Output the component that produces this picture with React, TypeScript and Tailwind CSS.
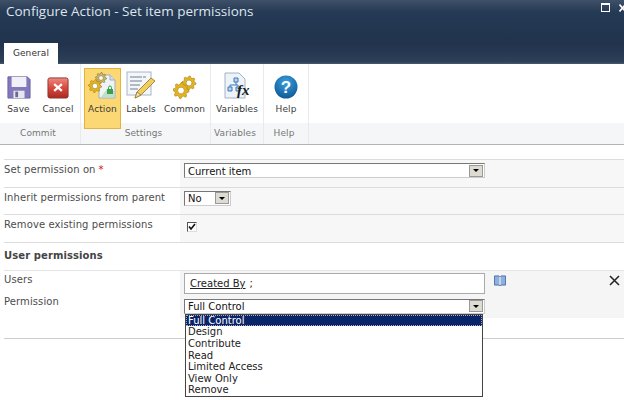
const VERDANA = "font-['DejaVu_Sans',Verdana,sans-serif]";

function gearPath(cx: number, cy: number, r: number, teeth = 8) {
  const pts: string[] = [];
  const step = (Math.PI * 2) / (teeth * 4);
  for (let i = 0; i < teeth * 4; i++) {
    const rad = i % 4 === 0 || i % 4 === 1 ? r : r * 0.76;
    const a = i * step;
    pts.push(`${(cx + rad * Math.cos(a)).toFixed(2)} ${(cy + rad * Math.sin(a)).toFixed(2)}`);
  }
  return `M${pts.join("L")}Z`;
}

function Gear({ cx, cy, r, color = "#e3b422", edge = "#a87f10" }: { cx: number; cy: number; r: number; color?: string; edge?: string }) {
  return (
    <g>
      <path d={gearPath(cx, cy, r)} fill={color} stroke={edge} strokeWidth="0.6" />
      <circle cx={cx} cy={cy} r={r * 0.42} fill="#fff" stroke={edge} strokeWidth="0.6" />
    </g>
  );
}

function SaveIcon() {
  return (
    <svg width="24" height="24" viewBox="0 0 26 26">
      <path d="M1 2h21l3 3v20H1z" fill="#8378bc" stroke="#6a5fa4" />
      <rect x="5" y="2" width="16" height="11" fill="#f0f0f8" />
      <rect x="7" y="17" width="12" height="8" fill="#e6e6ee" />
      <rect x="9" y="18" width="3" height="6" fill="#6a6a8a" />
    </svg>
  );
}

function CancelIcon() {
  return (
    <svg width="23" height="23" viewBox="0 0 24 24">
      <defs>
        <linearGradient id="cancel" x1="0" y1="0" x2="0" y2="1">
          <stop offset="0" stopColor="#ee8a80" />
          <stop offset="0.5" stopColor="#d9483c" />
          <stop offset="1" stopColor="#a82a22" />
        </linearGradient>
      </defs>
      <rect x="1" y="2" width="21" height="21" rx="2" fill="url(#cancel)" stroke="#8a3a34" />
      <path d="M7.5 8.5l8 7M15.5 8.5l-8 7" stroke="#fff" strokeWidth="2.4" />
    </svg>
  );
}

function ActionIcon() {
  return (
    <svg width="29" height="27" viewBox="0 0 29 27">
      <path d="M11 3h11l5 5v18H11z" fill="#eef3f6" stroke="#9fb0bd" />
      <path d="M22 3v5h5" fill="#cfe0ec" stroke="#9fb0bd" />
      <path d="M13 25l6-8 7 2v6z" fill="#bfe0c8" />
      <Gear cx={13} cy={6} r={5.5} color="#c9b467" edge="#8a7a3a" />
      <Gear cx={7} cy={14} r={6.5} />
      <rect x="19" y="17" width="6" height="5" fill="#3aa04a" />
      <path d="M20.5 17v-1.5a1.5 1.5 0 013 0V17" fill="none" stroke="#3aa04a" />
    </svg>
  );
}

function LabelsIcon() {
  return (
    <svg width="30" height="28" viewBox="0 0 30 28">
      <rect x="1" y="1" width="24" height="23" fill="#f3f6fa" stroke="#a7b6c6" />
      <path d="M4 6h16M4 10h13M4 14h10M4 18h8" stroke="#6f7f90" strokeDasharray="12 1" />
      <path d="M9 27l2-6L25 7l4 3L15 24z" fill="#f0cf60" stroke="#a58a38" />
      <path d="M9 27l2-6 4 3z" fill="#f0dcc0" stroke="#a58a38" />
    </svg>
  );
}

function CommonIcon() {
  return (
    <svg width="24" height="24" viewBox="0 0 24 24">
      <Gear cx={16} cy={8} r={7} />
      <Gear cx={8} cy={15.5} r={8} />
    </svg>
  );
}

function VariablesIcon() {
  return (
    <svg width="27" height="27" viewBox="0 0 27 27">
      <path d="M1 1h14l6 6v19H1z" fill="#eef3fa" stroke="#a4b2c4" />
      <path d="M10 6h4v4h-4zM4 15h4v4H4zM12 15h4v4h-4z" fill="#bcd4ee" stroke="#3f78b8" />
      <path d="M12 10v3M6 15v-2h8v2" fill="none" stroke="#3f78b8" />
      <text x="13" y="23" fontFamily="'Liberation Serif',serif" fontStyle="italic" fontWeight="700" fontSize="15" fill="#1a1a1a">
        fx
      </text>
    </svg>
  );
}

function HelpIcon() {
  return (
    <svg width="24" height="24" viewBox="0 0 24 24">
      <defs>
        <radialGradient id="help" cx="0.5" cy="0.3" r="0.8">
          <stop offset="0" stopColor="#3aa0e0" />
          <stop offset="1" stopColor="#0a4f8c" />
        </radialGradient>
      </defs>
      <circle cx="12" cy="12" r="11.5" fill="url(#help)" />
      <text x="12" y="18" textAnchor="middle" fontFamily="'Liberation Sans',sans-serif" fontWeight="700" fontSize="17" fill="#fff">
        ?
      </text>
    </svg>
  );
}

function RibbonButton({ label, icon, width, active }: { label: string; icon: React.ReactNode; width: string; active?: boolean }) {
  return (
    <div
      className={`relative z-10 flex h-[61px] flex-col items-center ${width} ${
        active ? "border border-[#e2b33f] bg-[#fbd873]" : "border border-transparent"
      }`}
    >
      <div className="flex h-[30px] items-end justify-center">{icon}</div>
      <span className="mt-[3px] text-[9px] leading-[14px] tracking-[0.1px] whitespace-nowrap text-[#3b3b3b]">{label}</span>
    </div>
  );
}

function RibbonGroup({ label, width, className, children }: { label: string; width: string; className?: string; children: React.ReactNode }) {
  return (
    <div className={`flex flex-col border-r border-[#e8eaec] ${width}`}>
      <div className={`flex h-[59px] pt-[4px] ${className ?? ""}`}>{children}</div>
      <div className="flex h-[21px] items-center justify-center bg-[#f5f6f7] pr-[4px] text-[9px] tracking-[0.1px] text-[#777]">{label}</div>
    </div>
  );
}

function FormRow({ label, required, children, alignTop = "pt-[3px]" }: { label: string; required?: boolean; children: React.ReactNode; alignTop?: string }) {
  return (
    <div className="ml-[4px] flex h-[27.6px] border-t border-[#dcdcdc]">
      <div className="w-[176px] pt-[2px] text-[10px] tracking-[0.1px] text-[#4c4c4c]">
        {label}
        {required && <span className="ml-[3px] text-[#d01010]">*</span>}
      </div>
      <div className={`flex flex-1 items-start bg-[#f7f7f7] pl-[4px] ${alignTop}`}>{children}</div>
    </div>
  );
}

function SelectBox({ value, width }: { value: string; width: string }) {
  return (
    <div className={`flex h-[15px] items-center justify-between border border-t-[#777] border-r-[#ccc] border-b-[#ccc] border-l-[#777] bg-white pr-px pl-[3px] text-[10px] leading-[13px] text-[#111] ${width}`}>
      <span className="pt-[1px]">{value}</span>
      <span className="flex h-[12px] w-[14px] items-center justify-center border border-[#999] bg-[#dedbd2]">
        <span className="h-0 w-0 border-x-[3px] border-t-[3px] border-x-transparent border-t-black" />
      </span>
    </div>
  );
}

const options = ["Full Control", "Design", "Contribute", "Read", "Limited Access", "View Only", "Remove"];

export default function App() {
  return (
    <div className={`h-[400px] w-[624px] overflow-hidden bg-white ${VERDANA}`}>
      <header className="flex h-[64px] flex-col justify-between bg-[linear-gradient(#3f5068_0,#253a55_12px,#21334d_45px,#2e4058_62px,#4a5a70_64px)]">
        <div className="flex items-start justify-between pl-[6px]">
          <h1 className="font-['Open_Sans',sans-serif] text-[13.5px] leading-[22px] text-[#dfe5ec]">Configure Action - Set item permissions</h1>
          <div className="flex items-center gap-[9px] pt-[3px]">
            <span className="h-[9px] w-[9px] border border-white border-t-2" />
            <svg width="5" height="8" viewBox="0 0 5 8">
              <path d="M0.5 0.5l6 7M6.5 0.5l-6 7" stroke="#fff" strokeWidth="1.6" />
            </svg>
          </div>
        </div>
        <div className="ml-[4px] flex h-[21px] w-[54px] items-center justify-center bg-white text-[9px] tracking-[0.1px] text-[#333]">General</div>
      </header>

      <div className="flex h-[81px] border-b border-[#b0b4b8]">
        <RibbonGroup label="Commit" width="w-[81px]" className="pl-[1px]">
          <RibbonButton label="Save" width="w-[35px]" icon={<SaveIcon />} />
          <RibbonButton label="Cancel" width="w-[44px]" icon={<CancelIcon />} />
        </RibbonGroup>
        <RibbonGroup label="Settings" width="w-[130px]" className="pl-[3px]">
          <RibbonButton label="Action" width="w-[37px]" active icon={<ActionIcon />} />
          <RibbonButton label="Labels" width="w-[40px]" icon={<LabelsIcon />} />
          <RibbonButton label="Common" width="w-[47px]" icon={<CommonIcon />} />
        </RibbonGroup>
        <RibbonGroup label="Variables" width="w-[53px]">
          <RibbonButton label="Variables" width="w-[52px]" icon={<VariablesIcon />} />
        </RibbonGroup>
        <RibbonGroup label="Help" width="w-[45px]">
          <RibbonButton label="Help" width="w-[44px]" icon={<HelpIcon />} />
        </RibbonGroup>
        <div className="flex flex-1 flex-col justify-end">
          <div className="h-[21px] bg-[#f5f6f7]" />
        </div>
      </div>

      <div className="pt-[14px]">
        <FormRow label="Set permission on" required>
          <SelectBox value="Current item" width="w-[301px]" />
        </FormRow>
        <FormRow label="Inherit permissions from parent">
          <SelectBox value="No" width="w-[47px]" />
        </FormRow>
        <FormRow label="Remove existing permissions" alignTop="pt-[7px]">
          <span className="ml-[3px] flex h-[10px] w-[10px] items-center justify-center border border-t-[#555] border-r-[#ddd] border-b-[#ddd] border-l-[#555] bg-white">
            <svg width="8" height="8" viewBox="0 0 8 8">
              <path d="M1 3.5l2 2.5 4-5" fill="none" stroke="#111" strokeWidth="1.6" />
            </svg>
          </span>
        </FormRow>
        <div className="ml-[4px] h-[28px] border-t border-[#dcdcdc] pt-[5px] text-[10px] font-bold tracking-[0.1px] text-[#444]">User permissions</div>

        <div className="relative ml-[4px] flex h-[48px] border-t border-[#e4e4e4]">
          <div className="w-[176px] pt-[2px] text-[10px] tracking-[0.1px] text-[#4c4c4c]">
            <div className="leading-[14px]">Users</div>
            <div className="mt-[8px] leading-[14px]">Permission</div>
          </div>
          <div className="flex-1 bg-[#f5f5f5] pt-[2px] pl-[4px]">
            <div className="flex h-[21px] w-[301px] items-center border border-[#aaa] bg-white pl-[5px] text-[10px] text-[#222]">
              <span className="underline">Created By</span>
              <span className="ml-[4px]">;</span>
            </div>
            <div className="mt-[5px]">
              <SelectBox value="Full Control" width="w-[301px]" />
            </div>
          </div>
          {/* address book + delete sit beside the field */}
          <svg className="absolute top-[4px] left-[489px]" width="14" height="11" viewBox="0 0 14 12">
            <path d="M1 1h5l1 1 1-1h5v10H8l-1 1-1-1H1z" fill="#8fb0dc" stroke="#4a6ea8" />
            <path d="M7 2v9" stroke="#fff" />
          </svg>
          <svg className="absolute top-[4px] left-[605px]" width="11" height="11" viewBox="0 0 11 11">
            <path d="M1 1l9 9M10 1l-9 9" stroke="#222" strokeWidth="1.5" />
          </svg>
          {/* open dropdown list */}
          <ul className="absolute top-[43px] left-[181px] z-20 w-[298px] border border-[#444] bg-white text-[10px] leading-[11.6px] text-[#222]">
            {options.map((o, i) => (
              <li key={o} className={`pl-[2px] ${i === 0 ? "bg-[#0a246a] text-white outline-1 -outline-offset-1 outline-[#aab] outline-dotted" : ""}`}>
                {o}
              </li>
            ))}
          </ul>
        </div>
        <div className="mt-[20px] ml-[4px] border-t border-[#ccc]" />
      </div>
    </div>
  );
}
